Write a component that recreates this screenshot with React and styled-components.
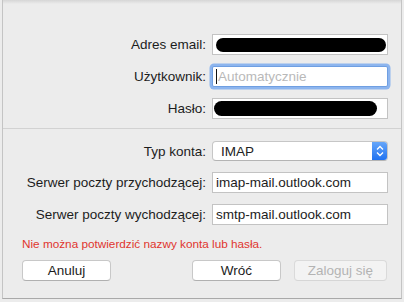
import React from 'react'
import styled, { createGlobalStyle } from 'styled-components'

const GlobalStyle = createGlobalStyle`
  html, body {
    margin: 0;
    padding: 0;
    background: #ececec;
  }
  body {
    font-family: "Liberation Sans", Arial, sans-serif;
    font-size: 13.5px;
    color: #222;
  }
`

const Window = styled.div`
  margin-left: 2px;
  width: 398px;
  height: 298px;
  background: #ececec;
  border-left: 1px solid #c4c4c4;
  border-right: 1px solid #c4c4c4;
  border-bottom: 1px solid #a9a9a9;
  background-image: linear-gradient(#d6d6d6, #ececec 4px);
  display: flex;
  flex-direction: column;
`

const Form = styled.div`
  display: grid;
  grid-template-columns: 1fr 176px;
  column-gap: 6px;
  row-gap: ${p => p.$gap}px;
  padding: ${p => p.$top}px 13px 0 0;
  align-items: center;
`

const Label = styled.label`
  text-align: right;
  white-space: nowrap;
  color: #1c1c1c;
`

const Field = styled.div`
  box-sizing: border-box;
  height: 21px;
  background: #fff;
  border: 1px solid ${p => (p.$focus ? '#6f9fe2' : '#c3c3c3')};
  box-shadow: ${p => (p.$focus ? '0 0 0 2.5px #8db5ee' : 'none')};
  border-radius: ${p => (p.$focus ? '2px' : '0')};
  display: flex;
  align-items: center;
  padding-left: 3px;
  color: #1c1c1c;
  overflow: hidden;
  white-space: nowrap;
`

const Caret = styled.span`
  width: 1px;
  height: 15px;
  background: #111;
  margin-right: 1px;
`

const Placeholder = styled.span`
  color: #b9b9b9;
`

const Redacted = styled.span`
  display: block;
  height: ${p => p.$h}px;
  width: ${p => p.$w}px;
  background: #000;
  border-radius: 8px;
`

const Separator = styled.div`
  height: 1px;
  background: #d2d2d2;
  margin-top: 9px;
`

const Popup = styled.div`
  box-sizing: border-box;
  height: 20px;
  background: #fff;
  border: 1px solid #c6c6c6;
  border-bottom-color: #b4b4b4;
  border-radius: 4px;
  display: flex;
  align-items: stretch;
  overflow: hidden;
`

const PopupValue = styled.span`
  flex: 1;
  display: flex;
  align-items: center;
  padding-left: 8px;
`

const PopupArrows = styled.span`
  width: 16px;
  margin: -1px -1px -1px 0;
  background: linear-gradient(#6aa9fa, #1b6ff0);
  display: flex;
  align-items: center;
  justify-content: center;
`

const ErrorText = styled.div`
  color: #e0352e;
  font-size: 11.75px;
  padding: 12px 0 0 19px;
`

const ButtonRow = styled.div`
  display: flex;
  align-items: center;
  padding: 10px 14px 0 19px;
`

const Button = styled.div`
  box-sizing: border-box;
  width: ${p => p.$w}px;
  height: 21px;
  display: flex;
  align-items: center;
  justify-content: center;
  border-radius: 4px;
  background: ${p => (p.$disabled ? '#f3f3f3' : '#fff')};
  border: 1px solid ${p => (p.$disabled ? '#dadada' : '#c8c8c8')};
  border-bottom-color: ${p => (p.$disabled ? '#d6d6d6' : '#b0b0b0')};
  color: ${p => (p.$disabled ? '#b3b3b3' : '#1c1c1c')};
  margin-left: ${p => p.$ml || 0}px;
`

const Spacer = styled.div`
  flex: 1;
`

const Chevrons = () => (
  <svg width="8" height="12" viewBox="0 0 8 12">
    <path d="M1 4.5 L4 1.5 L7 4.5 M1 7.5 L4 10.5 L7 7.5" fill="none" stroke="#fff" strokeWidth="1.3" />
  </svg>
)

export default function App() {
  return (
    <>
      <GlobalStyle />
      <Window>
        <Form $top={34} $gap={11}>
          <Label>Adres email:</Label>
          <Field><Redacted $w={170} $h={14} /></Field>
          <Label>Użytkownik:</Label>
          <Field $focus><Caret /><Placeholder>Automatycznie</Placeholder></Field>
          <Label>Hasło:</Label>
          <Field style={{ paddingLeft: 1 }}><Redacted $w={163} $h={15} /></Field>
        </Form>
        <Separator />
        <Form $top={12} $gap={11}>
          <Label>Typ konta:</Label>
          <Popup>
            <PopupValue>IMAP</PopupValue>
            <PopupArrows><Chevrons /></PopupArrows>
          </Popup>
          <Label>Serwer poczty przychodzącej:</Label>
          <Field>imap-mail.outlook.com</Field>
          <Label>Serwer poczty wychodzącej:</Label>
          <Field>smtp-mail.outlook.com</Field>
        </Form>
        <ErrorText>Nie można potwierdzić nazwy konta lub hasła.</ErrorText>
        <ButtonRow>
          <Button $w={89}>Anuluj</Button>
          <Spacer />
          <Button $w={89}>Wróć</Button>
          <Button $w={93} $ml={13} $disabled>Zaloguj się</Button>
        </ButtonRow>
      </Window>
    </>
  )
}
